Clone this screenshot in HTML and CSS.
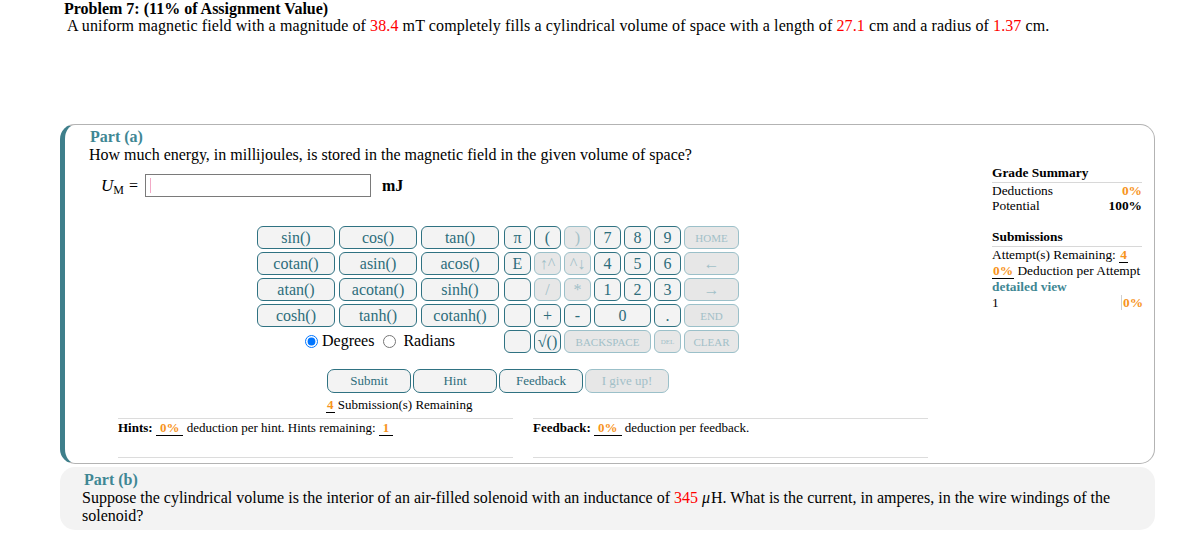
FILE: index.html
```html
<!DOCTYPE html>
<html lang="en">
<head>
<meta charset="utf-8">
<title>Problem 7</title>
<link rel="stylesheet" href="styles.css">
</head>
<body>
<div class="problem-head">Problem 7: (11% of Assignment Value)</div>
<div class="statement">A uniform magnetic field with a magnitude of <span class="val">38.4</span> mT completely fills a cylindrical volume of space with a length of <span class="val">27.1</span> cm and a radius of <span class="val">1.37</span> cm.</div>

<section class="part part-a">
  <div class="part-main">
    <div class="part-title">Part (a)</div>
    <div class="question">How much energy, in millijoules, is stored in the magnetic field in the given volume of space?</div>
    <div class="answer-row">
      <span class="math"><i>U</i><span class="sub">M</span> =</span>
      <div class="answer-box"><span class="caret"></span></div>
      <span class="unit">mJ</span>
    </div>

    <div class="calc">
      <div class="func-col">
        <div class="funcs">
          <button class="key">sin()</button>
          <button class="key">cos()</button>
          <button class="key">tan()</button>
          <button class="key">cotan()</button>
          <button class="key">asin()</button>
          <button class="key">acos()</button>
          <button class="key">atan()</button>
          <button class="key">acotan()</button>
          <button class="key">sinh()</button>
          <button class="key">cosh()</button>
          <button class="key">tanh()</button>
          <button class="key">cotanh()</button>
        </div>
        <div class="angle">
          <label class="radio"><input type="radio" name="ang" checked>Degrees</label>
          <label class="radio"><input type="radio" name="ang">Radians</label>
        </div>
      </div>
      <div class="keys">
        <button class="key">π</button>
        <button class="key">(</button>
        <button class="key off">)</button>
        <button class="key">7</button>
        <button class="key">8</button>
        <button class="key">9</button>
        <button class="key off small">HOME</button>

        <button class="key">E</button>
        <button class="key off">↑^</button>
        <button class="key off">^↓</button>
        <button class="key">4</button>
        <button class="key">5</button>
        <button class="key">6</button>
        <button class="key off">←</button>

        <button class="key"></button>
        <button class="key off">/</button>
        <button class="key off">*</button>
        <button class="key">1</button>
        <button class="key">2</button>
        <button class="key">3</button>
        <button class="key off">→</button>

        <button class="key"></button>
        <button class="key">+</button>
        <button class="key">-</button>
        <button class="key span2">0</button>
        <button class="key">.</button>
        <button class="key off small">END</button>

        <button class="key"></button>
        <button class="key">√()</button>
        <button class="key off small span3">BACKSPACE</button>
        <button class="key off tiny">DEL</button>
        <button class="key off small">CLEAR</button>
      </div>
    </div>

    <div class="actions">
      <button class="act">Submit</button>
      <button class="act">Hint</button>
      <button class="act">Feedback</button>
      <button class="act off">I give up!</button>
    </div>
    <div class="remaining"><span class="num">4</span> Submission(s) Remaining</div>

    <div class="hints">
      <div class="hint-col"><b>Hints:</b> <span class="num">0%</span> deduction per hint. Hints remaining: <span class="num">1</span></div>
      <div class="hint-col"><b>Feedback:</b> <span class="num">0%</span> deduction per feedback.</div>
    </div>
  </div>

  <aside class="grade">
    <div class="g-head">Grade Summary</div>
    <div class="g-row"><span>Deductions</span><span class="orange">0%</span></div>
    <div class="g-row"><span>Potential</span><b>100%</b></div>
    <div class="g-head g-sub">Submissions</div>
    <div class="g-line">Attempt(s) Remaining: <span class="num">4</span></div>
    <div class="g-line"><span class="num tight">0%</span> Deduction per Attempt</div>
    <div class="g-link">detailed view</div>
    <div class="g-row"><span>1</span><span class="orange g-cell">0%</span></div>
  </aside>
</section>

<section class="part part-b">
  <div class="part-title">Part (b)</div>
  <div class="question"><span>Suppose the cylindrical volume is the interior of an air-filled solenoid with an inductance of</span> <span class="val">345</span> <span class="mu">μ</span><span>H. What is the current, in amperes, in the wire windings of the</span> <span>solenoid?</span></div>
</section>
</body>
</html>
```
FILE: styles.css
```css
body {
  margin: 0;
  font-family: "Liberation Serif", "Times New Roman", serif;
  font-size: 16px;
  color: #000;
  background: #fff;
}

.problem-head {
  padding-left: 64px;
  font-weight: bold;
  line-height: 17px;
}

.statement {
  padding-left: 67px;
  line-height: 18px;
  letter-spacing: 0.1px;
}

.val { color: #ff0000; }

.part {
  margin: 0 38px 0 60px;
  border-radius: 15px;
}

.part-a {
  margin-top: 89px;
  display: flex;
  border: 1px solid #b3b3b3;
  border-left: 5px solid #3e7f8b;
  box-sizing: border-box;
  height: 340px;
}

.part-main {
  flex: 1;
  padding: 3px 0 0 24px;
}

.part-title {
  color: #3f8794;
  font-weight: bold;
  line-height: 18px;
  padding-left: 1px;
}

.question { line-height: 18px; }

.answer-row {
  display: flex;
  align-items: center;
  margin: 10px 0 0 12px;
  height: 23px;
}

.math { width: 44px; white-space: nowrap; }
.math i { font-style: italic; font-size: 17px; }
.math .sub { font-size: 12px; position: relative; top: 3px; margin-right: 1px; }

.answer-box {
  width: 226px;
  height: 23px;
  box-sizing: border-box;
  border: 1px solid #7a7a7a;
  display: flex;
  align-items: center;
  padding-left: 4px;
}

.caret {
  width: 1px;
  height: 15px;
  background: #f2a9c6;
}

.unit { font-weight: bold; margin-left: 11px; }

.calc {
  display: flex;
  gap: 5px;
  margin: 29px 0 0 168px;
}

.func-col { display: flex; flex-direction: column; gap: 3px; }

.funcs {
  display: grid;
  grid-template-columns: repeat(3, 78px);
  grid-auto-rows: 23px;
  gap: 3px 4px;
}

.keys {
  display: grid;
  grid-template-columns: repeat(6, 27px) 55px;
  grid-auto-rows: 23px;
  gap: 3px;
}

.key {
  font-family: "Liberation Serif", "Times New Roman", serif;
  font-size: 16px;
  color: #2d6d7b;
  background: #f3f3f3;
  border: 1px solid #2f7282;
  border-radius: 6px;
  padding: 0;
  line-height: 20px;
  margin: 0;
}

.key.off {
  background: #e7e7e7;
  border-color: #9bc0c9;
  color: #a2c0c8;
}

.key.small { font-size: 11px; }
.key.tiny { font-size: 7px; }
.span2 { grid-column: span 2; }
.span3 { grid-column: span 3; }

.angle {
  display: flex;
  justify-content: center;
  align-items: center;
  height: 22px;
  gap: 9px;
  padding-left: 4px;
}

.radio { display: flex; align-items: center; }
.radio input { margin: 0 4px 0 0; width: 13px; height: 13px; }
.radio + .radio input { margin-right: 7px; }

.actions {
  display: flex;
  gap: 2px;
  margin: 16px 0 0 238px;
}

.act {
  width: 84px;
  height: 24px;
  font-family: "Liberation Serif", "Times New Roman", serif;
  font-size: 13px;
  color: #2d6d7b;
  background: #f3f3f3;
  border: 1px solid #2f7282;
  border-radius: 7px;
  padding: 0;
}

.act.off {
  background: #e7e7e7;
  border-color: #9bc0c9;
  color: #a2c0c8;
}

.remaining {
  margin: 4px 0 0 237px;
  font-size: 13px;
  line-height: 16px;
}

.num {
  color: #f7941d;
  font-weight: bold;
  border-bottom: 1px solid #000;
  padding: 0 1px;
}

.hints .num { padding: 0 4px; }
.num.tight { padding: 0 1px; }

.hints {
  display: flex;
  gap: 20px;
  margin: 5px 0 0 29px;
}

.hint-col {
  width: 395px;
  height: 38px;
  border-top: 1px solid #dcdcdc;
  border-bottom: 1px solid #dcdcdc;
  font-size: 13px;
  line-height: 17px;
}

.grade {
  width: 150px;
  margin: 40px 12px 0 0;
  font-size: 13.4px;
  line-height: 15px;
}

.g-head {
  font-weight: bold;
  border-bottom: 1px solid #d8d8d8;
  padding-bottom: 2px;
}

.g-sub { margin-top: 16px; }

.g-row { display: flex; justify-content: space-between; line-height: 15px; }
.g-line { line-height: 16px; }

.orange { color: #f7941d; font-weight: bold; }

.g-cell {
  border-left: 1px solid #cfcfcf;
  padding-left: 1px;
  width: 19px;
  text-align: right;
}

.g-link {
  color: #3f8794;
  font-weight: bold;
  line-height: 16px;
}

.part-b {
  margin-top: 3px;
  background: #f3f3f3;
  padding: 4px 30px 5px 22px;
}

.part-b .part-title { padding-left: 2px; }

.mu { font-style: italic; margin-right: 1px; }
```
